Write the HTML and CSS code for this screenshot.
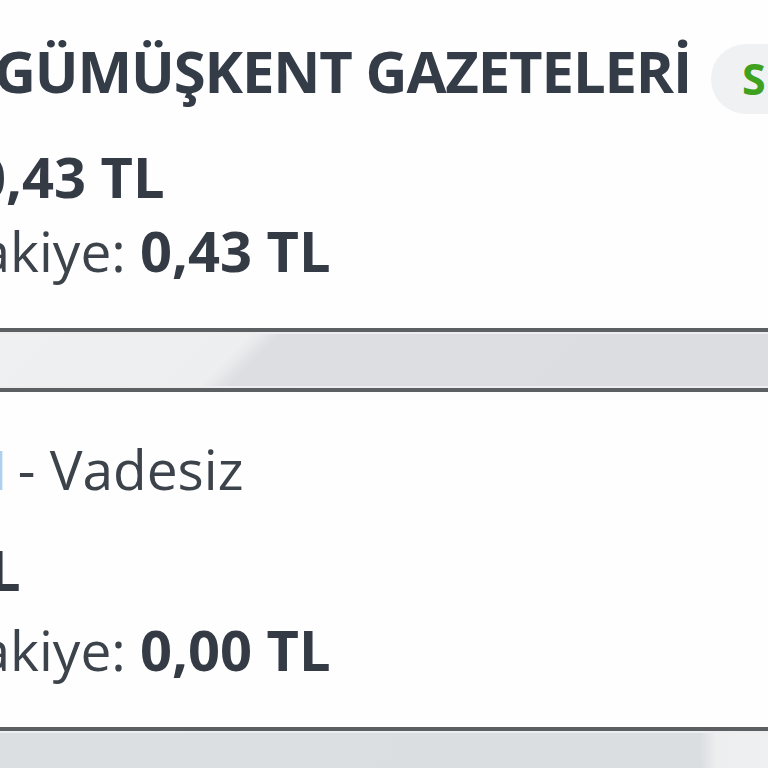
FILE: index.html
```html
<!DOCTYPE html>
<html lang="tr">
<head>
<meta charset="utf-8">
<link rel="stylesheet" href="styles.css">
</head>
<body>
<div class="page">
  <section class="card card-top">
    <div class="row title-row"><span class="title">GÜMÜŞKENT GAZETELERİ</span><span class="pill">SEÇİLİ</span></div>
    <div class="row amount-row"><b class="num">0,43 TL</b></div>
    <div class="row balance-row"><span class="label">Bakiye: </span><b class="num">0,43 TL</b></div>
  </section>
  <div class="band band-top"></div>
  <section class="card card-bottom">
    <div class="row account-row"><span class="acc-no">1</span><span class="label"> - Vadesiz</span></div>
    <div class="row amount2-row"><b class="num">0,00 TL</b></div>
    <div class="row balance2-row"><span class="label">Bakiye: </span><b class="num">0,00 TL</b></div>
  </section>
  <div class="band band-bottom"></div>
</div>
</body>
</html>
```
FILE: styles.css
```css
html, body {
  margin: 0;
  padding: 0;
  background: #fefefe;
}
body {
  width: 768px;
  height: 768px;
  overflow: hidden;
  font-family: "Open Sans", "Liberation Sans", sans-serif;
  color: #353c45;
  white-space: nowrap;
}
.page {
  display: flex;
  flex-direction: column;
  width: 768px;
}
.card {
  background: #fefefe;
  display: flex;
  flex-direction: column;
}
.card-top {
  padding: 3px 0 41px 0;
}
.card-bottom {
  padding: 17px 0 38px 0;
}
.row {
  display: block;
}
.title-row {
  height: 136px;
  line-height: 136px;
  margin-left: -6px;
}
.title {
  font-size: 58px;
  font-weight: 700;
  letter-spacing: -1.15px;
  color: #333c47;
}
.pill {
  display: inline-block;
  vertical-align: -2px;
  margin-left: 20px;
  height: 70px;
  line-height: 70px;
  padding: 0 24px 0 31px;
  border-radius: 35px;
  background: #eff1f3;
  color: #3fa11d;
  font-size: 43px;
  font-weight: 700;
}
.num {
  font-weight: 700;
  font-size: 56px;
  color: #343b45;
}
.label {
  font-size: 55px;
  font-weight: 400;
  color: #3d434a;
}
.amount-row {
  height: 74px;
  line-height: 74px;
  margin-left: -26px;
}
.balance-row {
  height: 74px;
  line-height: 74px;
  margin-left: -56px;
}
.account-row {
  height: 120px;
  line-height: 120px;
  margin-left: -17px;
}
.acc-no {
  font-size: 55px;
  color: #acd0ee;
  margin-right: -11px;
}
.amount2-row {
  height: 80px;
  line-height: 80px;
  margin-left: -170px;
}
.balance2-row {
  height: 80px;
  line-height: 80px;
  margin-left: -56px;
}
.band {
  border-top: 4px solid #5d6063;
  border-bottom: 4px solid #5d6063;
  box-shadow: inset 0 2px 0 #eceeef, inset 0 -2px 0 #eceeef;
}
.band-top {
  height: 56px;
  background: linear-gradient(135deg, #eef0f2 0, #eceef0 180px, #dcdee1 200px, #dbdde0 100%);
}
.band-bottom {
  height: 60px;
  border-bottom: 0;
  background: linear-gradient(90deg, #dcdfe2 0, #dbdee1 700px, #eceef0 716px, #eef0f2 100%);
}
```
